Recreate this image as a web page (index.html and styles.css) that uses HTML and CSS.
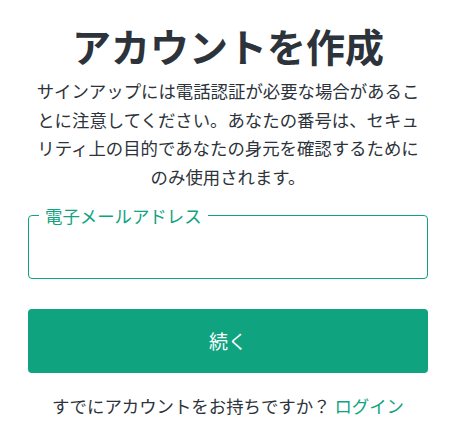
FILE: index.html
```html
<!DOCTYPE html>
<html>
  <head>
    <title>アカウントを作成</title>
    <link rel="stylesheet" href="styles.css">
  </head>
  <body>
    <div class="container">
      <h1 class="title">アカウントを作成</h1>
      <p class="intro">
        サインアップには電話認証が必要な場合があることに注意してください。あなたの番号は、セキュリティ上の目的であなたの身元を確認するためにのみ使用されます。
      </p>
      <fieldset class="field">
        <legend>電子メールアドレス</legend>
        <input type="email" id="email" />
      </fieldset>
      <button class="continue">続く</button>
      <p class="login">すでにアカウントをお持ちですか？ <a href="#">ログイン</a></p>
    </div>
  </body>
</html>
```

FILE: styles.css
```css
body {
  margin: 0;
  font-family: "Noto Sans CJK JP", "Noto Sans", sans-serif;
  color: #2d333a;
  background: #fff;
}
.container {
  width: 400px;
  margin-left: 28px;
  padding-top: 20px;
}
.title {
  margin: 0;
  font-size: 39px;
  font-weight: 700;
  line-height: 50px;
  text-align: center;
}
.intro {
  margin: 7px auto 0;
  width: 392px;
  font-size: 17.4px;
  line-height: 28.7px;
  text-align: center;
}
.field {
  margin: 14px 0 0;
  padding: 0 10px;
  border: 1px solid #10a37f;
  border-radius: 4px;
}
.field legend {
  padding: 0 6px;
  font-size: 17.4px;
  line-height: 20px;
  color: #10a37f;
}
.field input {
  display: block;
  border: none;
  outline: none;
  width: 100%;
  height: 52px;
  padding: 0;
  font-size: 17px;
  background: transparent;
}
.continue {
  display: block;
  margin-top: 30px;
  width: 400px;
  height: 64px;
  border: none;
  border-radius: 4px;
  background: #10a37f;
  color: #fff;
  font-family: inherit;
  font-size: 19px;
}
.login {
  margin: 21px 0 0;
  text-align: center;
  font-size: 17.4px;
  line-height: 24px;
}
.login a {
  color: #10a37f;
  text-decoration: none;
}
```
